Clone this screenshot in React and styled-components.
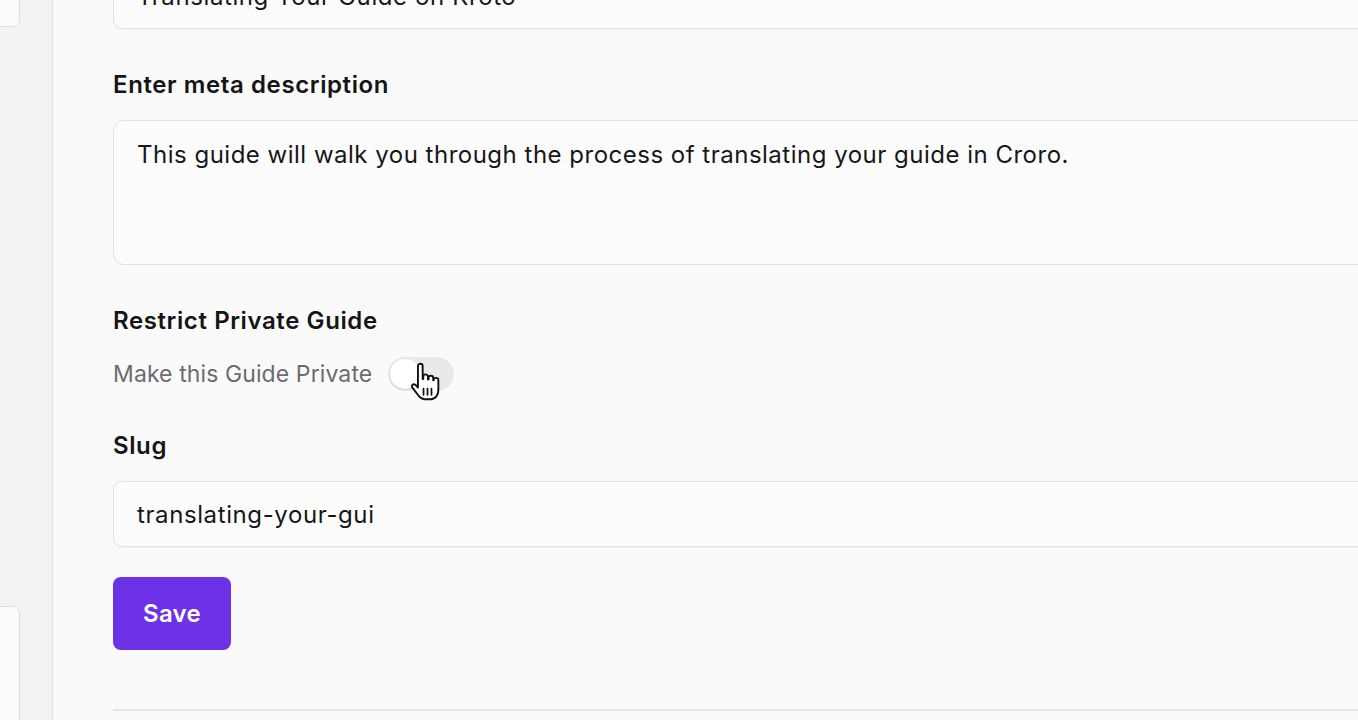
import React from "react";
import styled, { createGlobalStyle } from "styled-components";

const Global = createGlobalStyle`
  html, body { margin: 0; padding: 0; height: 720px; overflow: hidden; }
  body { font-family: Inter, "Noto Sans", "Liberation Sans", sans-serif; background: #fafafb; }
  #root { height: 720px; }
`;

const Page = styled.div`
  display: flex;
  height: 720px;
  width: 1358px;
  overflow: hidden;
`;

const Sidebar = styled.aside`
  flex: 0 0 52px;
  background: #f3f3f6;
  border-right: 1px solid #e3e3e7;
  display: flex;
  flex-direction: column;
  overflow: hidden;
`;

const SideCard = styled.div`
  width: 60px;
  margin-left: -40px;
  background: #fbfbfc;
  border: 1px solid #dedee2;
  border-radius: 7px;
  box-sizing: border-box;
  ${(p) => (p.$top ? "height: 47px; margin-top: -20px;" : "height: 134px; margin-top: auto; margin-bottom: -20px; padding-top: 80px;")}
`;

const SideInner = styled.div`
  width: 40px;
  height: 80px;
  margin-left: -20px;
  background: #fcfcfd;
  border: 1px solid #dedee2;
  border-radius: 6px;
  box-sizing: border-box;
`;

const Main = styled.main`
  flex: 1;
  overflow: hidden;
  padding-left: 60px;
`;

const Content = styled.div`
  width: 1320px;
  margin-top: -37px;
  display: flex;
  flex-direction: column;
`;

const TextInput = styled.input`
  height: 66px;
  box-sizing: border-box;
  border: 1px solid #e2e2e6;
  border-radius: 9px;
  background: #fcfcfd;
  padding: 0 23px;
  font-family: inherit;
  font-size: 24px;
  letter-spacing: 0.6px;
  color: #171717;
  outline: none;
  box-shadow: 0 1px 1px rgba(0, 0, 0, 0.03);
  margin-bottom: ${(p) => p.$mb || 0}px;
`;

const TextArea = styled.textarea`
  height: 145px;
  box-sizing: border-box;
  border: 1px solid #e2e2e6;
  border-radius: 11px;
  background: #fcfcfd;
  padding: 18px 23px;
  font-family: inherit;
  font-size: 24px;
  letter-spacing: 0.5px;
  line-height: 32px;
  color: #171717;
  resize: none;
  outline: none;
  margin-bottom: 41px;
`;

const Label = styled.label`
  font-size: 24px;
  letter-spacing: 0.6px;
  line-height: 30px;
  font-weight: 600;
  color: #151515;
  margin-bottom: ${(p) => p.$mb}px;
`;

const ToggleRow = styled.div`
  display: flex;
  align-items: center;
  gap: 16px;
  height: 36px;
  margin-bottom: 39px;
`;

const ToggleText = styled.span`
  font-size: 23px;
  letter-spacing: 0.1px;
  color: #6b6b70;
`;

const ToggleWrap = styled.div`
  position: relative;
  width: 66px;
  height: 34px;
`;

const Track = styled.div`
  width: 66px;
  height: 34px;
  border-radius: 17px;
  background: #e9e9ec;
  box-sizing: border-box;
  padding: 2px;
`;

const Knob = styled.div`
  width: 30px;
  height: 30px;
  border-radius: 50%;
  background: #fff;
  box-shadow: 0 1px 2px rgba(0, 0, 0, 0.12);
`;

const Cursor = styled.svg`
  position: absolute;
  left: 16px;
  top: 3px;
  width: 47px;
  height: 47px;
`;

const SaveButton = styled.button`
  width: 118px;
  height: 73px;
  border: none;
  border-radius: 8px;
  background: #6d31e8;
  color: #fff;
  font-family: inherit;
  font-size: 24px;
  letter-spacing: 0.3px;
  font-weight: 600;
  margin-bottom: 59px;
  cursor: pointer;
`;

const Divider = styled.hr`
  width: 100%;
  margin: 0;
  border: none;
  border-top: 2px solid #e6e6e9;
`;

function HandCursor() {
  return (
    <Cursor viewBox="0 0 32 32">
      <path
        d="M9.5 4.2a1.6 1.6 0 0 1 3.2 0V13h.4v-1.6a1.6 1.6 0 0 1 3.2 0V13.2h.4v-.9a1.6 1.6 0 0 1 3.2 0v1.5h.3a1.6 1.6 0 0 1 3.2 0V20.5c0 3.2-2 6.2-5.2 6.2h-4.2c-2 0-3.1-.9-4.2-2.5L5.6 18.6c-.9-1.3.8-2.8 2-1.8L9.5 18.7Z"
        fill="#fff"
        stroke="#111"
        strokeWidth="1.3"
        strokeLinejoin="round"
      />
      <path d="M13.3 19.5v4.2M16 19.5v4.2M18.7 19.5v4.2" stroke="#111" strokeWidth="1.2" strokeLinecap="round" />
    </Cursor>
  );
}

export default function App() {
  return (
    <Page>
      <Global />
      <Sidebar>
        <SideCard $top />
        <SideCard>
          <SideInner />
        </SideCard>
      </Sidebar>
      <Main>
        <Content>
          <TextInput readOnly defaultValue="Translating Your Guide on Kroto" $mb={41} />
          <Label $mb={20}>Enter meta description</Label>
          <TextArea
            readOnly
            defaultValue="This guide will walk you through the process of translating your guide in Croro."
          />
          <Label $mb={20}>Restrict Private Guide</Label>
          <ToggleRow>
            <ToggleText>Make this Guide Private</ToggleText>
            <ToggleWrap>
              <Track>
                <Knob />
              </Track>
              <HandCursor />
            </ToggleWrap>
          </ToggleRow>
          <Label $mb={20}>Slug</Label>
          <TextInput readOnly defaultValue="translating-your-gui" $mb={30} />
          <div>
            <SaveButton>Save</SaveButton>
          </div>
          <Divider />
        </Content>
      </Main>
    </Page>
  );
}
